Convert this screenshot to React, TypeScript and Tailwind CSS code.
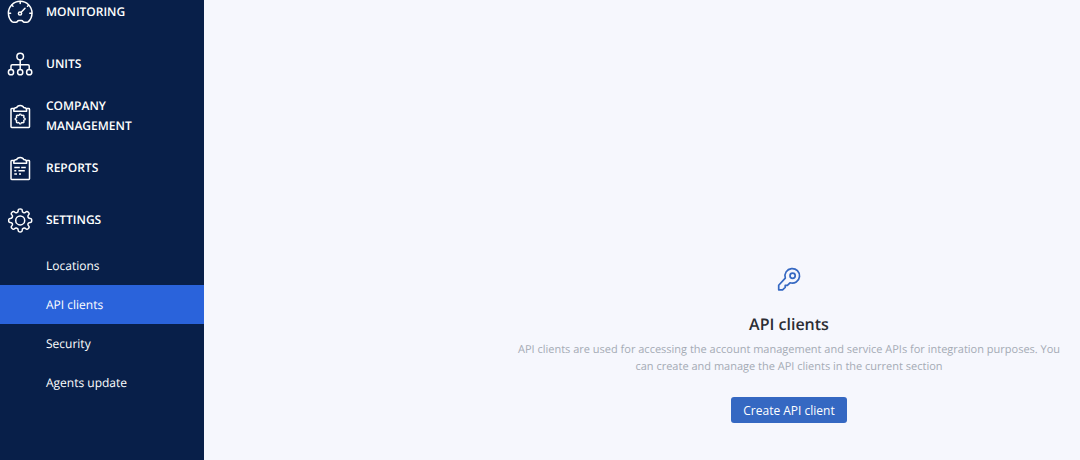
import type { ReactNode } from "react";

// Closed outline of a cog, curved through the middle of each edge so the teeth stay soft
function cogPath(cx: number, cy: number, outer: number, inner: number) {
  const teeth = 8;
  const step = (Math.PI * 2) / teeth;
  const points: number[][] = [];
  const add = (radius: number, angle: number) =>
    points.push([cx + radius * Math.sin(angle), cy - radius * Math.cos(angle)]);
  for (let i = 0; i < teeth; i++) {
    const a = i * step;
    add(inner, a - step * 0.28);
    add(outer, a - step * 0.23);
    add(outer, a + step * 0.23);
    add(inner, a + step * 0.28);
  }
  const middle = (i: number) => {
    const [ax, ay] = points[i % points.length];
    const [bx, by] = points[(i + 1) % points.length];
    return `${((ax + bx) / 2).toFixed(2)} ${((ay + by) / 2).toFixed(2)}`;
  };
  const curves = points.map(
    (_, i) =>
      `Q${points[(i + 1) % points.length].map((n) => n.toFixed(2)).join(" ")} ${middle(i + 1)}`
  );
  return `M${middle(0)}${curves.join("")}Z`;
}

function Icon({ children }: { children: ReactNode }) {
  return (
    <svg
      className="size-[26px] shrink-0"
      viewBox="0 0 26 26"
      fill="none"
      stroke="currentColor"
      strokeWidth="1.5"
      strokeLinecap="round"
      strokeLinejoin="round"
      aria-hidden="true"
    >
      {children}
    </svg>
  );
}

function Clipboard() {
  return (
    <>
      <path d="M6.8 5.6H4.7a.7.7 0 0 0-.7.7v17.4a.7.7 0 0 0 .7.7h17.1a.7.7 0 0 0 .7-.7V6.3a.7.7 0 0 0-.7-.7h-2.1" />
      <path d="M6.8 8.2V7c0-1.6.9-2.4 2.9-2.5.4-1.3 1.6-2.1 3.5-2.1s3.1.8 3.5 2.1c2 .1 2.9.9 2.9 2.5v1.2z" />
    </>
  );
}

const sections = [
  {
    label: "Monitoring",
    icon: (
      <Icon>
        <path d="M5.2 22.8C2.8 20.8 1.4 17.6 1.4 14a11.8 11.8 0 0 1 23.6 0c0 3.6-1.4 6.8-3.8 8.8-.3.3-.8.4-1.3.4h-2.4c-.8 0-1.3-.2-1.6-.8-.3-.6-.7-.8-1.4-.8h-2.6c-.7 0-1.1.2-1.4.8-.3.6-.8.8-1.600.8H6.500c-.5 0-1-.1-1.300-.4z" />
        <circle cx="13" cy="14.5" r="1.6" />
        <path d="M14.2 13.2 18 9.3M13.2 2.6v1.8M4.8 6.2l1.2 1.1M21.6 6.2l-1.1 1M1.8 14.3h1.8M22.8 14.3h1.8" />
      </Icon>
    ),
  },
  {
    label: "Units",
    icon: (
      <Icon>
        <circle cx="13.2" cy="5.6" r="3.3" />
        <circle cx="4" cy="21.2" r="2.6" />
        <circle cx="13.2" cy="21.2" r="2.6" />
        <circle cx="22.2" cy="21.2" r="2.6" />
        <path d="M13.2 9v9.5M4 18.5V15c0-.8.4-1.2 1.2-1.2H21c.8 0 1.2.4 1.2 1.2v3.5" />
      </Icon>
    ),
  },
  {
    label: "Company management",
    icon: (
      <Icon>
        <Clipboard />
        <path d={cogPath(13.2, 16, 5, 3.9)} strokeWidth="1.4" />
      </Icon>
    ),
  },
  {
    label: "Reports",
    icon: (
      <Icon>
        <Clipboard />
        <path
          d="M7.3 12.5h5.5M14.2 12.5h4.6M7.3 15.8h2M11.4 15.8h6.4M7.3 19H10M12 19h2"
          strokeLinecap="butt"
        />
      </Icon>
    ),
  },
  {
    label: "Settings",
    icon: (
      <Icon>
        <path d={cogPath(13.2, 13.4, 11.7, 8.6)} />
        <circle cx="13.2" cy="13.4" r="4.5" />
      </Icon>
    ),
  },
];

const settingsPages = [
  { label: "Locations", active: false },
  { label: "API clients", active: true },
  { label: "Security", active: false },
  { label: "Agents update", active: false },
];

function Sidebar() {
  return (
    <nav className="w-[204px] shrink-0 bg-[#081f49] text-white">
      <ul className="flex flex-col gap-7">
        {sections.map((section) => (
          <li key={section.label}>
            <a
              href="#"
              className="flex h-6 items-center gap-[13px] pr-16 pl-[7px] text-xs leading-5 font-semibold uppercase"
            >
              {section.icon}
              {section.label}
            </a>
          </li>
        ))}
      </ul>
      <ul className="mt-3.5">
        {settingsPages.map((page) => (
          <li key={page.label}>
            <a
              href="#"
              aria-current={page.active ? "page" : undefined}
              className={`flex h-[39px] items-center pl-[46px] text-xs ${
                page.active ? "bg-[#2a63db]" : "hover:bg-white/5"
              }`}
            >
              {page.label}
            </a>
          </li>
        ))}
      </ul>
    </nav>
  );
}

export default function App() {
  return (
    <div className="flex min-h-screen bg-[#f6f7fd] font-['Open_Sans','Noto_Sans',sans-serif] [text-rendering:geometricPrecision]">
      <Sidebar />
      <main className="flex flex-1 flex-col items-center pt-[267px] pl-[294px] text-center">
        <svg
          className="size-6 text-[#3568c2]"
          viewBox="0 0 24 24"
          fill="none"
          stroke="currentColor"
          strokeWidth="1.7"
          strokeLinecap="round"
          strokeLinejoin="round"
          aria-hidden="true"
        >
          <path d="M8.3 11.1A7.3 7.3 0 1 1 13 15.8l-2.6 2.6H8.200v2L5.600 22.800H1.700v-4.500z" />
          <circle cx="15.6" cy="8.8" r="2.6" />
        </svg>
        <h1 className="mt-[21px] text-base leading-6 font-semibold text-[#2b2d33]">
          API clients
        </h1>
        <p className="mt-[5px] px-3 text-[11px] leading-[17px] text-[#a5abb5]">
          API clients are used for accessing the account management and service
          APIs for integration purposes. You can create and manage the API
          clients in the current section
        </p>
        <button
          type="button"
          className="mt-[22px] h-[26px] rounded-[3px] bg-[#3568c2] px-3 pt-0.5 text-xs text-white"
        >
          Create API client
        </button>
      </main>
    </div>
  );
}
